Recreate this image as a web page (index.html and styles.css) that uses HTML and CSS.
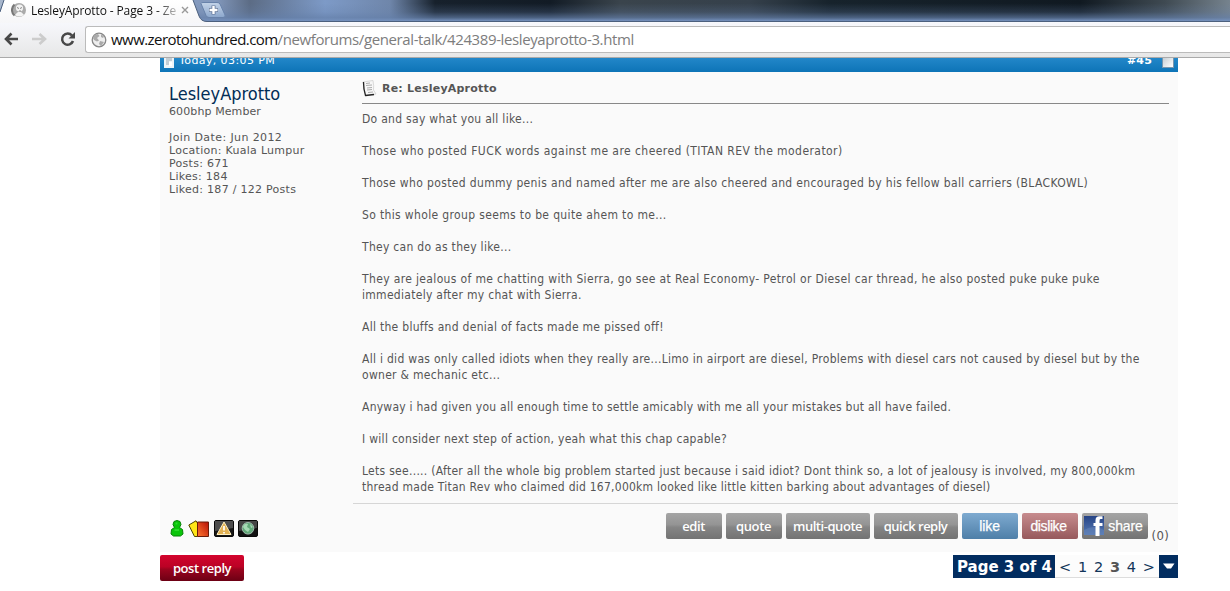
FILE: index.html
```html
<!DOCTYPE html>
<html lang="en">
<head>
<meta charset="utf-8">
<title>LesleyAprotto - Page 3</title>
<link rel="stylesheet" href="styles.css">
</head>
<body>
<header class="browser">
  <div class="tabstrip">
    <svg class="tab-shapes" width="240" height="23" viewBox="0 0 240 23">
      <defs>
        <linearGradient id="tab" x1="0" y1="0" x2="0" y2="1"><stop offset="0" stop-color="#fff"/><stop offset="1" stop-color="#f6f6f8"/></linearGradient>
        <linearGradient id="plus" x1="0" y1="0" x2="0" y2="1"><stop offset="0" stop-color="#c3d3e8"/><stop offset="1" stop-color="#8ca7cc"/></linearGradient>
      </defs>
      <path d="M0 0H4L0 10Z" fill="#a7b6cc"/>
      <path d="M0 12L4 0H193L199 16Q201 21.500 207 21.500V23H0Z" fill="url(#tab)"/>
      <path d="M0 12L4 0M193 0L199 16Q201 21.500 207 21.500H240" fill="none" stroke="#4c607e"/>
      <path d="M201 3.500Q201 2.500 203 2.500H217Q219 2.500 220 4L225 15Q226 17.500 223 17.500H209Q207 17.500 206 15.500Z" fill="url(#plus)" stroke="#6882aa"/>
      <path d="M213.500 5.500V14.500M209 10H218" stroke="#637799" stroke-width="4"/>
      <path d="M213.500 6V14M209.500 10H217.500" stroke="#fff" stroke-width="2.400"/>
    </svg>
    <div class="tab">
      <svg width="16" height="16" viewBox="0 0 16 16"><circle cx="8" cy="8" r="7" fill="#aaa"/><path d="M3.500 2.600A7 7 0 0 0 3.500 13.400" fill="none" stroke="#777" stroke-width="2"/><circle cx="8.500" cy="6" r="3.600" fill="#f2f2f2"/><path d="M4 13Q8.500 6 13 13Q8 16 4 13" fill="#f4f4f4"/><path d="M6 5.500L8 6.500M11 5.500L9 6.500M8 9H10" stroke="#888"/></svg>
      <span class="tab-title">LesleyAprotto - Page 3 - Ze</span>
      <svg width="8" height="8" viewBox="0 0 8 8"><path d="M1 1L7 7M7 1L1 7" stroke="#999" stroke-width="1.400"/></svg>
    </div>
  </div>
  <div class="toolbar">
    <svg class="nav" width="78" height="20" viewBox="0 0 78 20">
      <path d="M18 10H7M11.500 4.500L6 10L11.500 15.500" fill="none" stroke="#484848" stroke-width="2.600"/>
      <path d="M32 10H44M39.500 5L45 10L39.500 15" fill="none" stroke="#ccc" stroke-width="2.600"/>
      <path d="M72 6.500A5.600 5.600 0 1 0 73 12" fill="none" stroke="#484848" stroke-width="2.500"/><path d="M75 3V9.500H68.500Z" fill="#484848"/>
    </svg>
    <div class="omnibox">
      <svg width="16" height="16" viewBox="0 0 16 16"><circle cx="8" cy="8" r="6.800" fill="#eee" stroke="#888" stroke-width="1.300"/><path d="M2 6Q3 2 7 2L8.500 4L6 6L8 8.500L6 9.500L3 8ZM10 2L13 4.500L12 6L10 5ZM9 9L13 10L10 14L8 12Z" fill="#aaa"/></svg>
      <span class="url"><b>www.zerotohundred.com</b>/newforums/general-talk/424389-lesleyaprotto-3.html</span>
    </div>
  </div>
</header>
<main class="forum">
  <article class="post">
    <div class="post-head">
      <svg width="10" height="12" viewBox="0 0 10 12"><path d="M0 0H10V12H0Z" fill="#edf4f8"/><path d="M2 2H8V5H5V9H2Z" fill="#c3cdd4"/><path d="M5 6H8V10H5Z" fill="#fff"/></svg>
      <span class="date">Today, 03:05 PM</span>
      <b class="number">#45</b>
      <span class="check"></span>
    </div>
    <div class="post-body">
      <aside class="author">
        <div class="name">LesleyAprotto</div>
        <div class="rank">600bhp Member</div>
        <div class="stats">
          <div class="joined">Join Date: Jun 2012</div><div>Location: Kuala Lumpur</div><div>Posts: 671</div><div>Likes: 184</div><div>Liked: 187 / 122 Posts</div>
        </div>
      </aside>
      <section class="content">
        <h1 class="subject">
          <svg width="15" height="17" viewBox="0 0 15 17"><path d="M1 2L11 .5Q12 6 11.500 10L14 14L4 16Q2 10 1 2Z" fill="#f7f7f7" stroke="#ccc" stroke-width=".7"/><path d="M1.500 2Q1.500 10 3.500 15.500L12 14.500" fill="none" stroke="#222" stroke-width="1.300"/><path d="M4 3.500L8 3M4 5.500L10 5M5 8L10 7.500M5 10L10 9.500M6 12.500L11 12" stroke="#999" stroke-width=".8"/></svg>
          <span>Re: LesleyAprotto</span>
        </h1>
        <div class="message">
          <p>Do and say what you all like...</p>
          <p class="widest">Those who posted FUCK words against me are cheered (TITAN REV the moderator)</p>
          <p class="wide">Those who posted dummy penis and named after me are also cheered and encouraged by his fellow ball carriers (BLACKOWL)</p>
          <p class="wide">So this whole group seems to be quite ahem to me...</p>
          <p>They can do as they like...</p>
          <p class="wide">They are jealous of me chatting with Sierra, go see at Real Economy- Petrol or Diesel car thread, he also posted puke puke puke<br><span class="normal">immediately after my chat with Sierra.</span></p>
          <p>All the bluffs and denial of facts made me pissed off!</p>
          <p>All i did was only called idiots when they really are...Limo in airport are diesel, Problems with diesel cars not caused by diesel but by the<br>owner &amp; mechanic etc...</p>
          <p class="narrow">Anyway i had given you all enough time to settle amicably with me all your mistakes but all have failed.</p>
          <p>I will consider next step of action, yeah what this chap capable?</p>
          <p>Lets see..... (After all the whole big problem started just because i said idiot? Dont think so, a lot of jealousy is involved, my 800,000km<br><span class="narrow">thread made Titan Rev who claimed did 167,000km looked like little kitten barking about advantages of diesel)</span></p>
        </div>
      </section>
    </div>
    <footer class="post-foot">
      <div class="status">
        <svg width="14" height="17" viewBox="0 0 14 17"><path d="M4 1.500L7 .5L10 1.500L11 4.500L9.500 7.500L12.500 9.500L13 14L10.500 16H3.500L1 14L1.500 9.500L4.500 7.500L3 4.500Z" fill="#0bc50b" stroke="#078207"/><path d="M5.500 3.500H7.500M4.500 10H9" stroke="#2bdc2b" stroke-width="2"/></svg>
        <svg width="21" height="17" viewBox="0 0 21 17"><defs><linearGradient id="card" x1="1" y1="0" x2="0" y2="1"><stop stop-color="#b70e05"/><stop offset="1" stop-color="#ff7930"/></linearGradient></defs><path d="M.8 5L8 .8L15 12L9 16.500H6.500Z" fill="#ffe617" stroke="#4d4500"/><path d="M9.500 2H20.500V16.500H9.500Z" fill="url(#card)" stroke="#6b1b09"/></svg>
        <svg width="20" height="17" viewBox="0 0 20 17"><rect x=".5" y=".5" width="19" height="16" rx="1.500" fill="#171717" stroke="#090909"/><path d="M1 1H19V8L1 11Z" fill="#4d4d4d"/><path d="M10 2L17 14.500H3Z" fill="#e2b153" stroke="#fff0bf"/><path d="M10 6V10.500M10 12V13.500" stroke="#fff" stroke-width="1.700"/></svg>
        <svg width="20" height="17" viewBox="0 0 20 17"><rect x=".5" y=".5" width="19" height="16" rx="1.500" fill="#121212" stroke="#090909"/><path d="M1 1H19V8L1 11Z" fill="#454545"/><circle cx="10" cy="8.300" r="5.800" fill="#61a878" stroke="#a1bbae"/><path d="M5 7Q6 3 10 4L9 7L12 9L10 12Q7 11 5 7ZM12 4L15 7L13 8Z" fill="#a4d9b3"/></svg>
      </div>
      <div class="actions">
        <span class="btn w56">edit</span>
        <span class="btn w56">quote</span>
        <span class="btn w84">multi-quote</span>
        <span class="btn w84">quick reply</span>
        <span class="btn like w56">like</span>
        <span class="btn dislike w56">dislike</span>
        <span class="btn share w66"><svg width="21" height="20" viewBox="0 0 21 20"><defs><linearGradient id="fb" x1="0" y1="0" x2="0" y2="1"><stop stop-color="#264486"/><stop offset="1" stop-color="#5679b3"/></linearGradient></defs><path d="M0 0H20V19H0Z" fill="url(#fb)"/><path d="M0 14Q10 8 20 14V19H0Z" fill="#6787bc" opacity=".5"/><path d="M18.500 3H16.500Q15.500 3 15.500 5V7H18.500V10H15.500V20H11.500V10H9.500V7H11.500V4.500Q11.500 .3 15.500 .3H18.500Z" fill="#fff"/></svg>share</span>
        <span class="count">(0)</span>
      </div>
    </footer>
  </article>
  <nav class="bottom">
    <span class="reply">post reply</span>
    <div class="pages">
      <b class="current">Page 3 of 4</b>
      <div class="links"><span>&lt;</span><span>1</span><span>2</span><b>3</b><span>4</span><span>&gt;</span></div>
      <span class="drop"><svg width="12" height="7" viewBox="0 0 12 7"><path d="M0 .5H11.500L8 5.500H4Z" fill="#fff"/></svg></span>
    </div>
  </nav>
</main>
</body>
</html>
```
FILE: styles.css
```css
* { box-sizing: border-box; }
body { margin: 0; width: 1230px; height: 591px; overflow: hidden; background: #fff; color: #555; font-family: "DejaVu Sans", sans-serif; }
svg { display: block; flex: none; }
.browser { height: 58px; border-bottom: 1px solid #aaa; background: #ededee; }
.tabstrip { position: relative; height: 22px; background: linear-gradient(transparent 15%, #647fa940 55%, #647fa9b0 80%, #7490bc 95%, #4c607e 97%), linear-gradient(90deg, #8399bd 0, #8399bd 215px, #5c6c85 250px, #7d9ac7 325px, #6f86aa 390px, #17212c 435px, #121b25 550px, #3a444c 620px, #35404b 750px, #17232c 830px, #101921 1080px, #3f4a52 1165px, #76838e 1230px); }
.tab-shapes { position: absolute; left: 0; top: 0; }
.tab { position: relative; height: 20px; width: 190px; padding-left: 11px; display: flex; align-items: center; color: #222; font: 12px "Open Sans", sans-serif; }
.tab-title { width: 145px; margin: 0 5px 0 4px; white-space: nowrap; overflow: hidden; letter-spacing: -.12px; background: linear-gradient(90deg, #111 125px, #bbb); background-clip: text; color: transparent; }
.toolbar { height: 35px; display: flex; align-items: flex-start; padding-top: 4px; background: linear-gradient(#f7f8fc, #e7e7e7); }
.nav { margin: 3px 7px 0 0; }
.omnibox { flex: 1; height: 27px; border: 1px solid #bbb; border-right: 0; border-radius: 3px 0 0 3px; background: #fff; display: flex; align-items: center; gap: 4px; padding-left: 5px; }
.url { font: 15px/25px "Open Sans", sans-serif; letter-spacing: -.39px; white-space: nowrap; color: #7d7d7d; }
.url b { font-weight: 400; letter-spacing: -.56px; color: #111; }
.forum { width: 1018px; margin-left: 160px; }
.post { height: 494px; background: #fafafa; display: flex; flex-direction: column; }
.post-head { height: 14px; overflow: hidden; display: flex; align-items: flex-start; padding: 0 4px; background: linear-gradient(#2287c9, #0d74b7); color: #fff; font-size: 11px; }
.post-head svg { margin-top: -2px; }
.date { margin: -4px auto 0 5px; line-height: 13px; letter-spacing: .4px; }
.number { margin: -4px 10px 0 0; line-height: 13px; letter-spacing: .2px; }
.check { width: 12px; height: 12px; margin-top: -2px; border: 1px solid #eee; background: linear-gradient(135deg, #c4ccd2, #fff); outline: 1px solid #7896ae; outline-offset: -1px; }
.post-body { height: 431px; display: flex; }
.author { width: 193px; padding: 10px 0 0 9px; font-size: 11px; line-height: 13px; letter-spacing: .28px; }
.name { font-family: "DejaVu Sans Condensed", "DejaVu Sans", sans-serif; font-size: 18px; line-height: 23px; letter-spacing: 0; color: #022d56; }
.rank { letter-spacing: .1px; }
.joined { letter-spacing: .4px; }
.stats { margin-top: 13px; }
.content { width: 825px; border-bottom: 1px solid #d6d6d6; padding: 8px 9px 0 9px; margin-bottom: -1px; }
.subject { margin: 0; height: 24px; border-bottom: 1px solid #888; display: flex; gap: 5px; font-size: 11px; line-height: 17px; letter-spacing: .22px; }
.message { padding-top: 7px; font-family: "DejaVu Sans Condensed", "DejaVu Sans", sans-serif; font-size: 12px; line-height: 16px; letter-spacing: .29px; white-space: nowrap; }
.message p { margin: 0 0 16px; }
.message .widest { letter-spacing: .44px; }
.message .wide { letter-spacing: .355px; }
.message .normal { letter-spacing: .29px; }
.message .narrow { letter-spacing: .245px; }
.post-foot { height: 49px; display: flex; justify-content: space-between; padding: 10px 9px 0 10px; }
.status { display: flex; gap: 4.3px; padding-top: 7px; }
.actions { display: flex; gap: 4px; }
.btn { height: 26px; border-radius: 2px; display: flex; align-items: center; justify-content: center; color: #fff; background: linear-gradient(#a5a5a5, #949494 45%, #858585 55%, #737373); font: 600 13px "Open Sans", sans-serif; letter-spacing: -.4px; }
.w56 { width: 56px; } .w84 { width: 84px; } .w66 { width: 66px; }
.w84 { letter-spacing: -.45px; }
.w84 + .w84 { letter-spacing: -.5px; }
.like, .dislike, .share { font: 14px "Liberation Sans", sans-serif; -webkit-text-stroke: .25px #fff; }
.like { background: linear-gradient(#7eaad0, #4e7fa8); letter-spacing: -.1px; }
.dislike { background: linear-gradient(#c78c8e, #96595c); padding-right: 2px; }
.share { gap: 3px; letter-spacing: -.1px; padding-right: 2px; }
.count { font: 13px "DejaVu Sans Condensed", sans-serif; align-self: flex-start; margin-top: 15px; letter-spacing: .3px; }
.bottom { display: flex; justify-content: space-between; margin-top: 3px; }
.reply { width: 84px; height: 26px; border-radius: 2px; background: linear-gradient(#d3042d, #bb0225 45%, #9b041e 55%, #6c0014); color: #fff; text-align: center; font: 600 13px/26px "Open Sans", sans-serif; letter-spacing: -.45px; }
.pages { height: 23px; display: flex; line-height: 24px; font-size: 15px; }
.current { width: 102px; padding-left: 1px; text-align: center; white-space: nowrap; background: #022d60; color: #fff; }
.links { width: 104px; border-bottom: 1px solid #ddd; background: #fcfcfc; display: flex; justify-content: space-between; padding: 0 4px; color: #123459; font-size: 14.5px; }
.links b { color: #555; }
.drop { width: 19px; background: #022d60; display: flex; align-items: center; justify-content: center; }
```
